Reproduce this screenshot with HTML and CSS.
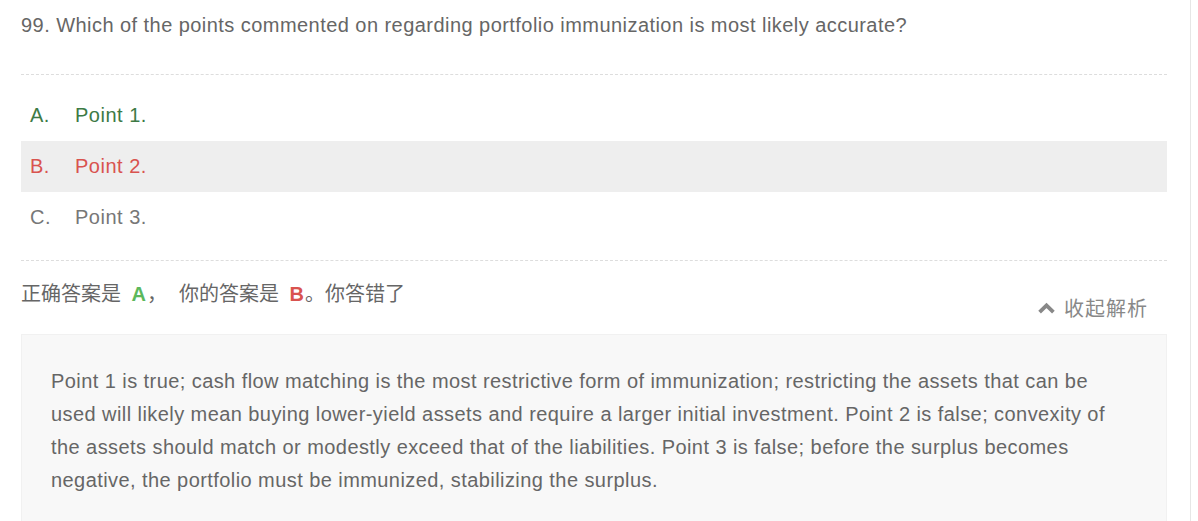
FILE: index.html
```html
<!DOCTYPE html>
<html>
<head>
<meta charset="utf-8">
<link rel="stylesheet" href="styles.css">
</head>
<body>
<div class="page">
  <div class="question">
    <div class="q-title">99. Which of the points commented on regarding portfolio immunization is most likely accurate?</div>
    <ul class="options">
      <li class="opt opt-correct"><span class="opt-key">A.</span><span class="opt-text">Point 1.</span></li>
      <li class="opt opt-wrong"><span class="opt-key">B.</span><span class="opt-text">Point 2.</span></li>
      <li class="opt"><span class="opt-key">C.</span><span class="opt-text">Point 3.</span></li>
    </ul>
    <div class="result">
      <div class="result-text">正确答案是 <b class="ans-right">A</b>，<span class="gap"></span>你的答案是 <b class="ans-wrong">B</b>。你答错了</div>
      <div class="toggle">
        <svg class="toggle-icon" width="17" height="12" viewBox="0 0 17 12"><path d="M1.6 10.2 L8.5 3.4 L15.4 10.2" fill="none" stroke="#888" stroke-width="3.8" stroke-linejoin="miter"/></svg>
        <span>收起解析</span>
      </div>
    </div>
    <div class="analysis">
      <p>Point 1 is true; cash flow matching is the most restrictive form of immunization; restricting the assets that can be used will likely mean buying lower-yield assets and require a larger initial investment. Point 2 is false; convexity of the assets should match or modestly exceed that of the liabilities. Point 3 is false; before the surplus becomes negative, the portfolio must be immunized, stabilizing the surplus.</p>
    </div>
  </div>
</div>
</body>
</html>
```

FILE: styles.css
```css
html, body {
  margin: 0;
  padding: 0;
  background: #fff;
}
body {
  font-family: "Liberation Sans", Arial, "Noto Sans CJK SC", sans-serif;
  color: #666;
}
.page {
  width: 1190px;
  height: 521px;
  border-right: 1px solid #e6e6e6;
  overflow: hidden;
}
.question {
  width: 1146px;
  margin-left: 21px;
}
.q-title {
  font-size: 20px;
  letter-spacing: 0.45px;
  line-height: 24px;
  padding-top: 13px;
  padding-bottom: 37px;
  border-bottom: 1px dashed #ddd;
  color: #666;
}
.options {
  list-style: none;
  margin: 15px 0 0;
  padding: 0 0 17px;
  border-bottom: 1px dashed #ddd;
}
.opt {
  display: flex;
  align-items: center;
  height: 51px;
  font-size: 20px;
  letter-spacing: 0.5px;
  color: #777;
  padding-left: 9px;
}
.opt-key {
  width: 45px;
}
.opt-correct { color: #3d7a45; }
.opt-wrong { color: #d9534f; background: #eeeeee; }
.result {
  display: flex;
  justify-content: space-between;
  align-items: flex-start;
  padding-top: 20px;
  height: 53px;
}
.result-text {
  font-size: 20px;
  line-height: 26px;
  color: #666;
}
.result-text b {
  display: inline-block;
  margin: 0 1px 0 5px;
}
.gap {
  display: inline-block;
  width: 12px;
}
.ans-right { color: #5cb85c; }
.ans-wrong { color: #d9534f; }
.toggle {
  display: flex;
  align-items: center;
  gap: 9px;
  margin-top: 14px;
  margin-right: 19px;
  font-size: 20px;
  letter-spacing: 1px;
  line-height: 26px;
  color: #888;
  font-family: "Noto Sans CJK SC", sans-serif;
}
.analysis {
  background: #f8f8f8;
  border: 1px solid #f1f1f1;
  padding: 30px 30px 30px 29px;
  min-height: 160px;
}
.analysis p {
  margin: 0;
  font-size: 20px;
  letter-spacing: 0.43px;
  line-height: 33px;
  color: #666;
}
```
